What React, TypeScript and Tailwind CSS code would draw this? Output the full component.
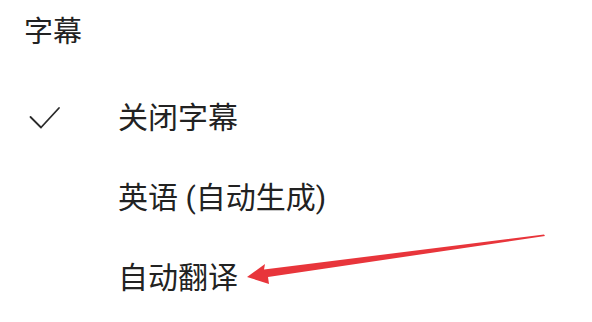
const font = { fontFamily: '"Roboto", "Noto Sans CJK SC", sans-serif' }

const options = [
  { label: "关闭字幕", checked: true },
  { label: "英语 (自动生成)", checked: false },
  { label: "自动翻译", checked: false },
]

function Check() {
  return (
    <svg width="32" height="24" viewBox="0 0 32 24" fill="none">
      <path d="M1.5 11 L12 21.5 L30 2" stroke="#2a2a2a" strokeWidth="1.8" strokeLinecap="round" strokeLinejoin="round" />
    </svg>
  )
}

export default function App() {
  return (
    <div className="relative h-[322px] w-[592px] overflow-hidden bg-white text-[#222222]" style={font}>
      <div className="h-[78px] pl-[24px] pt-[12px]">
        <h2 className="text-[29px] leading-[40px] font-normal">字幕</h2>
      </div>
      <ul>
        {options.map((o) => (
          <li key={o.label} className="flex h-[80px] items-center">
            <span className="flex w-[118px] items-center pl-[29px]">{o.checked && <Check />}</span>
            <span className="text-[30px] leading-[40px]">{o.label}</span>
          </li>
        ))}
      </ul>
      <svg className="pointer-events-none absolute left-0 top-0" width="592" height="322" viewBox="0 0 592 322">
        <polygon points="247,277 265,264 264,269.5 544,234.5 545,236 268,277 269,284" fill="#e8353b" />
      </svg>
    </div>
  )
}
